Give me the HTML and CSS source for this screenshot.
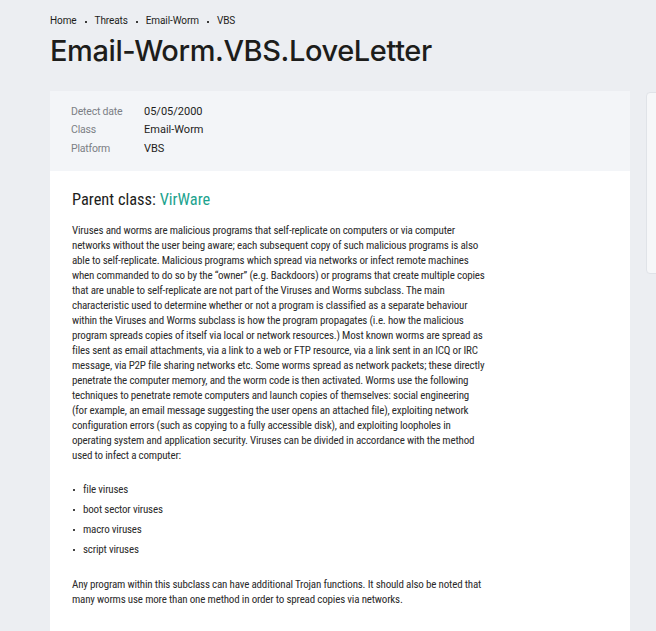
FILE: index.html
```html
<!DOCTYPE html>
<html lang="en">
<head>
<meta charset="utf-8">
<title>Email-Worm.VBS.LoveLetter</title>
<link rel="stylesheet" href="styles.css">
</head>
<body>
<div class="page">
  <nav class="crumbs">
    <a href="#">Home</a><span class="sep"></span>
    <a href="#">Threats</a><span class="sep"></span>
    <a href="#">Email-Worm</a><span class="sep"></span>
    <a href="#">VBS</a>
  </nav>
  <h1 class="title">Email-Worm.VBS.LoveLetter</h1>
  <div class="layout">
    <main class="card">
      <section class="meta">
        <div class="row"><span class="label">Detect date</span><span class="value">05/05/2000</span></div>
        <div class="row"><span class="label">Class</span><span class="value">Email-Worm</span></div>
        <div class="row"><span class="label">Platform</span><span class="value">VBS</span></div>
      </section>
      <section class="body">
        <h2 class="parent">Parent class: <a href="#">VirWare</a></h2>
        <div class="text">
          <p>Viruses and worms are malicious programs that self-replicate on computers or via computer<br>
networks without the user being aware; each subsequent copy of such malicious programs is also<br>
able to self-replicate. Malicious programs which spread via networks or infect remote machines<br>
when commanded to do so by the “owner” (e.g. Backdoors) or programs that create multiple copies<br>
that are unable to self-replicate are not part of the Viruses and Worms subclass. The main<br>
characteristic used to determine whether or not a program is classified as a separate behaviour<br>
within the Viruses and Worms subclass is how the program propagates (i.e. how the malicious<br>
program spreads copies of itself via local or network resources.) Most known worms are spread as<br>
files sent as email attachments, via a link to a web or FTP resource, via a link sent in an ICQ or IRC<br>
message, via P2P file sharing networks etc. Some worms spread as network packets; these directly<br>
penetrate the computer memory, and the worm code is then activated. Worms use the following<br>
techniques to penetrate remote computers and launch copies of themselves: social engineering<br>
(for example, an email message suggesting the user opens an attached file), exploiting network<br>
configuration errors (such as copying to a fully accessible disk), and exploiting loopholes in<br>
operating system and application security. Viruses can be divided in accordance with the method<br>
used to infect a computer:</p>
          <ul class="list">
            <li>file viruses</li>
            <li>boot sector viruses</li>
            <li>macro viruses</li>
            <li>script viruses</li>
          </ul>
          <p>Any program within this subclass can have additional Trojan functions. It should also be noted that many worms use more than one method in order to spread copies via networks.</p>
        </div>
      </section>
    </main>
    <aside class="side"></aside>
  </div>
</div>
</body>
</html>
```
FILE: styles.css
```css
* { box-sizing: border-box; }
html, body { margin: 0; padding: 0; }
body {
  background: #eceef2;
  font-family: Roboto, "Liberation Sans", sans-serif;
  color: #1d1d1b;
  overflow: hidden;
  height: 631px;
}
.page {
  padding: 14px 0 0 50px;
}
.crumbs {
  display: flex;
  align-items: center;
  font-size: 10px;
  line-height: 14px;
  letter-spacing: -0.1px;
}
.crumbs a { color: #1d1d1b; text-decoration: none; }
.sep {
  width: 2px;
  height: 2px;
  background: #3a3a3a;
  margin: 2px 8px 0;
}
.title {
  margin: 5px 0 0;
  font-family: Inter, Roboto, sans-serif;
  font-size: 29px;
  line-height: 36px;
  font-weight: 500;
  letter-spacing: -0.4px;
  color: #1d1d1b;
}
.layout {
  display: flex;
  align-items: flex-start;
  gap: 16px;
  margin-top: 22px;
}
.card {
  width: 580px;
  flex: none;
  background: #fff;
  min-height: 560px;
}
.meta {
  background: #f3f5f8;
  padding: 12px 21px 12px;
  height: 80px;
}
.row {
  display: flex;
  line-height: 18.4px;
}
.label {
  width: 73px;
  flex: none;
  font-size: 10.5px;
  letter-spacing: -0.2px;
  color: #7c7f85;
}
.value {
  font-size: 11px;
  color: #1d1d1b;
}
.body {
  padding: 18px 22px 20px;
}
.parent {
  margin: 0;
  font-family: "Roboto Condensed", Roboto, sans-serif;
  font-size: 16.4px;
  line-height: 22px;
  font-weight: 400;
  color: #1d1d1b;
}
.parent a { color: #1ca38e; text-decoration: none; }
.text {
  margin-top: 12px;
  max-width: 421px;
  font-family: "Roboto Condensed", Roboto, sans-serif;
  font-size: 11px;
  line-height: 15px;
  letter-spacing: -0.18px;
  color: #2b2b2b;
}
.text p { margin: 0; }
.list {
  list-style: none;
  margin: 17px 0 17px;
  padding: 0;
}
.list li {
  position: relative;
  padding-left: 11px;
  line-height: 20px;
}
.list li::before {
  content: "";
  position: absolute;
  left: 1px;
  top: 9px;
  width: 2px;
  height: 2px;
  background: #444;
}
.side {
  flex: none;
  width: 200px;
  height: 182px;
  margin-top: 1px;
  background: #f6f7f9;
  border: 1px solid #e0e3e8;
  border-radius: 4px;
}
```
